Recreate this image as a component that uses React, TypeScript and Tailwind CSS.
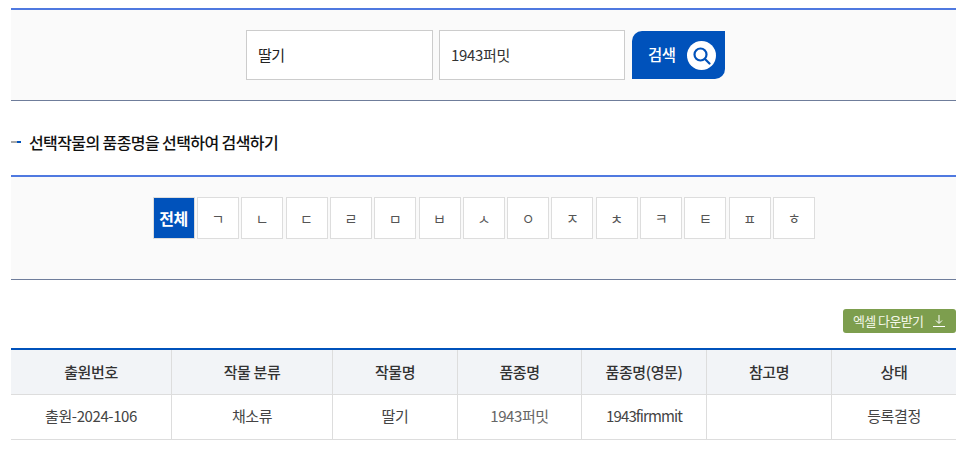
import React from "react";

const letters = ["ㄱ","ㄴ","ㄷ","ㄹ","ㅁ","ㅂ","ㅅ","ㅇ","ㅈ","ㅊ","ㅋ","ㅌ","ㅍ","ㅎ"];
const heads = ["출원번호","작물 분류","작물명","품종명","품종명(영문)","참고명","상태"];
const cells = ["출원-2024-106","채소류","딸기","1943퍼밋","1943firmmit","","등록결정"];
const widths = ["w-[160.5px]","w-[161px]","w-[125px]","w-[124px]","w-[125px]","w-[125px]","w-[124.5px]"];

export default function App() {
  return (
    <div className="w-[963px] h-[459px] overflow-hidden bg-white pl-[11px] pt-[8px] pr-[7px] font-['Noto_Sans_CJK_KR','Noto_Sans',sans-serif] text-[#222]">
      <div className="h-[93px] border-t-2 border-b border-t-[#4f79e0] border-b-[#6f7d9b] bg-[#fafafa] flex justify-center items-start pt-[20px] pl-[4px]">
        <div className="w-[187px] h-[50px] border border-[#cccccc] bg-white flex items-center pl-[11px] text-[15px] tracking-[-0.5px] text-[#222]">딸기</div>
        <div className="ml-[6px] w-[186px] h-[50px] border border-[#cccccc] bg-white flex items-center pl-[11px] text-[15px] tracking-[-0.3px] text-[#333]">1943퍼밋</div>
        <div className="ml-[7px] mt-[1px] w-[93px] h-[48px] bg-[#0052bb] rounded-tl-[10px] rounded-br-[10px] flex items-center pl-[16px] gap-[11px] text-white text-[15.500px] font-medium tracking-[-0.5px]">
          <span>검색</span>
          <span className="w-[29px] h-[29px] rounded-full bg-white flex items-center justify-center">
            <svg width="19" height="19" viewBox="0 0 19 19" fill="none" stroke="#0052bb" strokeWidth="2.2">
              <circle cx="8.5" cy="8.5" r="6" />
              <path d="M13 13l4.5 4.5" strokeLinecap="round" />
            </svg>
          </span>
        </div>
      </div>

      <div className="h-[74px] flex items-center pt-[8px]">
        <span className="flex h-[2px] w-[10px] mr-[8px]">
          <span className="w-[6px] bg-[#a8a8a8]" />
          <span className="w-[4px] bg-[#0052bb]" />
        </span>
        <h2 className="text-[16px] font-medium tracking-[-0.6px] text-[#111] leading-none">선택작물의 품종명을 선택하여 검색하기</h2>
      </div>

      <div className="h-[105px] border-t-2 border-b border-t-[#4f79e0] border-b-[#6f7d9b] bg-[#fafafa] flex justify-center items-start pt-[20px] pl-[3px]">
        <div className="w-[42px] h-[42px] mr-[2.330px] shrink-0 border border-[#dddddd] bg-[#0052bb] text-white font-bold text-[16px] tracking-[-0.5px] flex items-center justify-center">전체</div>
        {letters.map((l) => (
          <div key={l} className="w-[42px] h-[42px] mr-[2.330px] shrink-0 border border-[#dddddd] bg-white text-[#555] text-[14px] flex items-center justify-center">{l}</div>
        ))}
      </div>

      <div className="flex justify-end pt-[29px] h-[68px]">
        <div className="w-[113px] h-[24px] rounded-[3px] bg-[#7d9e4e] text-[#f4f7e8] text-[13px] tracking-[-0.6px] flex items-center pl-[10px]">
          <span className="whitespace-nowrap">엑셀 다운받기</span>
          <svg className="ml-[9px] shrink-0" width="14" height="14" viewBox="0 0 14 14" fill="none" stroke="#ffffff" strokeWidth="1">
            <path d="M7 1v8M4 6.5L7 9.500l3-3M1 12.500h12" />
          </svg>
        </div>
      </div>

      <table className="w-[945px] table-fixed border-collapse border-t-2 border-t-[#0052bb] text-[15px] tracking-[-0.4px]">
        <colgroup>
          {widths.map((w, i) => <col key={i} className={w} />)}
        </colgroup>
        <thead>
          <tr className="h-[45px] bg-[#f2f4f7] border-b border-[#dddddd]">
            {heads.map((h, i) => (
              <th key={h} className={`font-medium text-[#333] text-center ${i < 6 ? "border-r border-[#dddddd]" : ""}`}>{h}</th>
            ))}
          </tr>
        </thead>
        <tbody>
          <tr className="h-[45px] border-b border-[#dddddd]">
            {cells.map((c, i) => (
              <td key={i} className={`font-normal text-center ${i === 3 ? "text-[#666]" : "text-[#444]"} ${i === 4 ? "tracking-[-0.9px]" : ""} ${i < 6 ? "border-r border-[#dddddd]" : ""}`}>{c}</td>
            ))}
          </tr>
        </tbody>
      </table>
    </div>
  );
}
